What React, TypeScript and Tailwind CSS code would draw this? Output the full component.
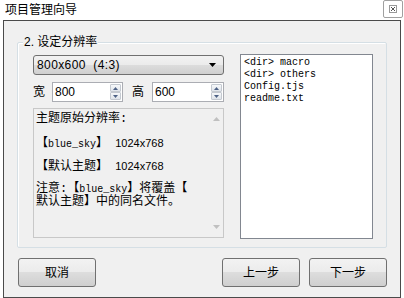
const SANS = "font-['Liberation_Sans','Noto_Sans_CJK_SC',sans-serif]";

function Spinner() {
  return (
    <div className="flex flex-col w-[11px] h-[16px] mr-[1px]">
      <div className="flex-1 flex items-center justify-center border border-[#c4c9d0] rounded-[1px] bg-[linear-gradient(#f6f8fa,#dfe4ea)]">
        <svg width="5" height="3" viewBox="0 0 5 3"><path d="M0 3 L2.5 0 L5 3 Z" fill="#4d6185" /></svg>
      </div>
      <div className="flex-1 flex items-center justify-center border border-[#c4c9d0] rounded-[1px] bg-[linear-gradient(#f6f8fa,#dfe4ea)]">
        <svg width="5" height="3" viewBox="0 0 5 3"><path d="M0 0 L2.5 3 L5 0 Z" fill="#4d6185" /></svg>
      </div>
    </div>
  );
}

function NumInput({ value, width }: { value: string; width: string }) {
  return (
    <div className={`${width} h-[20px] bg-white border border-[#abadb3] flex items-center justify-between`}>
      <span className="pl-[2px] text-[12px] leading-none">{value}</span>
      <Spinner />
    </div>
  );
}

function Btn({ label }: { label: string }) {
  return (
    <div className="w-[78px] h-[29px] border border-[#707070] rounded-[3px] bg-[linear-gradient(#f2f2f2_0%,#ebebeb_50%,#dddddd_50%,#cfcfcf_100%)] flex items-center justify-center text-[12px]">
      {label}
    </div>
  );
}

export default function App() {
  return (
    <div className={`w-[404px] h-[298px] bg-white relative overflow-hidden text-black ${SANS}`}>
      {/* title bar */}
      <div className="h-[20px] flex items-center pl-[5px] text-[12px]">项目管理向导</div>
      <div className="absolute right-[1px] top-0 w-[20px] h-[18px] border border-[#a0a0a0] rounded-[2px] bg-white flex items-center justify-center">
        <svg width="8" height="8" viewBox="0 0 8 8">
          <rect x="0.5" y="0.5" width="7" height="7" fill="none" stroke="#999" strokeWidth="1" />
          <path d="M2 2 L6 6 M6 2 L2 6" stroke="#555" strokeWidth="1" />
        </svg>
      </div>

      {/* body */}
      <div className="mx-[3px] h-[278px] border border-[#4a4a4a] bg-[#f0f0f0] flex flex-col">
        {/* group */}
        <div className="relative ml-[13px] mr-[13px] mt-[21px] h-[206px] border border-[#d5dfe5] rounded-[2px] shadow-[inset_1px_1px_0_#fff] flex items-start pl-[15px] pt-[11px]">
          <div className="absolute left-[5px] top-[-7px] bg-[#f0f0f0] px-[1px] text-[12px] leading-[12px]">2. 设定分辨率</div>

          {/* left column */}
          <div className="w-[191px] flex flex-col mt-[1px]">
            <div className="h-[20px] border border-[#707070] rounded-[3px] bg-[linear-gradient(#f2f2f2_0%,#ebebeb_50%,#dddddd_50%,#cfcfcf_100%)] flex items-center justify-between pl-[3px] pr-[7px] text-[12px]">
              <span className="whitespace-pre tracking-[0.4px]">800x600  (4:3)</span>
              <svg width="7" height="4" viewBox="0 0 7 4"><path d="M0 0 L7 0 L3.5 4 Z" fill="#000" /></svg>
            </div>
            <div className="mt-[7px] h-[20px] flex items-center">
              <span className="w-[19px] text-[12px]">宽</span>
              <NumInput value="800" width="w-[71px]" />
              <span className="ml-[9px] w-[20px] text-[12px]">高</span>
              <NumInput value="600" width="w-[72px]" />
            </div>
            <div className="mt-[6px] h-[130px] border border-[#c8c8c8] bg-[#f0f0f0] relative pl-[2px] pt-[4px] text-[12px] font-['Liberation_Mono','Noto_Sans_CJK_SC',monospace]">
              <div className="leading-[13px]">主题原始分辨率:</div>
              <div className="leading-[13px] mt-[11px]">【<span className="text-[10px]">blue_sky</span>】 <span className={`${SANS} text-[11px]`}>1024x768</span></div>
              <div className="leading-[13px] mt-[9px]">【默认主题】 <span className={`${SANS} text-[11px]`}>1024x768</span></div>
              <div className="leading-[13px] mt-[9px]">注意:【<span className="text-[10px]">blue_sky</span>】将覆盖【</div>
              <div className="leading-[12px]">默认主题】中的同名文件。</div>
              <div className="absolute right-[3px] top-[8px]">
                <svg width="7" height="4" viewBox="0 0 7 4"><path d="M0 4 L3.5 0 L7 4 Z" fill="#c0c0c0" /></svg>
              </div>
              <div className="absolute right-[3px] bottom-[8px]">
                <svg width="7" height="4" viewBox="0 0 7 4"><path d="M0 0 L7 0 L3.5 4 Z" fill="#c0c0c0" /></svg>
              </div>
            </div>
          </div>

          {/* file list */}
          <div className="ml-[16px] w-[133px] h-[185px] bg-white border border-[#828790] pl-[3px] pt-[2px] text-[10px] leading-[12px] font-['Liberation_Mono',monospace]">
            <div>&lt;dir&gt; macro</div>
            <div>&lt;dir&gt; others</div>
            <div>Config.tjs</div>
            <div>readme.txt</div>
          </div>
        </div>

        {/* buttons */}
        <div className="mt-[10px] ml-[14px] mr-[13px] flex items-center">
          <Btn label="取消" />
          <div className="flex-1" />
          <Btn label="上一步" />
          <div className="w-[9px]" />
          <Btn label="下一步" />
        </div>
      </div>
    </div>
  );
}
